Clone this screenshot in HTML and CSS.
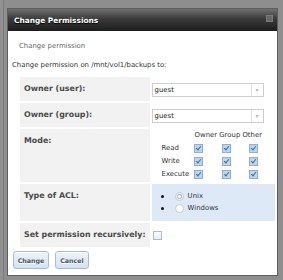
FILE: index.html
```html
<!DOCTYPE html>
<html lang="en">
<head>
    <meta charset="UTF-8">
    <title>Change Permissions</title>
    <link rel="stylesheet" href="styles.css">
</head>
<body>

    <div class="overlay">
        <div class="dialog">
            <div class="titlebar">
                <span class="title">Change Permissions</span>
                <span class="close"></span>
            </div>

            <div class="content">
                <div class="subhead">Change permission</div>
                <p class="intro">Change permission on /mnt/vol1/backups to:</p>

                <table class="form">
                    <tr class="row-short">
                        <th>Owner (user):</th>
                        <td class="cell-select">
                            <div class="select"><span class="select-value">guest</span><span class="select-arrow">&#9662;</span></div>
                        </td>
                    </tr>
                    <tr class="row-short">
                        <th>Owner (group):</th>
                        <td class="cell-select">
                            <div class="select"><span class="select-value">guest</span><span class="select-arrow">&#9662;</span></div>
                        </td>
                    </tr>
                    <tr>
                        <th>Mode:</th>
                        <td class="cell-mode">
                            <div class="mode">
                                <span class="mode-head">Owner Group Other</span>
                                <span class="mode-label">Read</span><span class="check on"></span><span class="check on"></span><span class="check on"></span>
                                <span class="mode-label">Write</span><span class="check on"></span><span class="check on"></span><span class="check on"></span>
                                <span class="mode-label">Execute</span><span class="check on"></span><span class="check on"></span><span class="check on"></span>
                            </div>
                        </td>
                    </tr>
                    <tr>
                        <th>Type of ACL:</th>
                        <td class="cell-acl">
                            <ul class="radios">
                                <li><span class="radio on"></span>Unix</li>
                                <li><span class="radio"></span>Windows</li>
                            </ul>
                        </td>
                    </tr>
                    <tr class="row-short">
                        <th>Set permission recursively:</th>
                        <td class="cell-recursive"><span class="check"></span></td>
                    </tr>
                </table>

                <div class="buttons">
                    <button class="btn btn-change">Change</button>
                    <button class="btn btn-cancel">Cancel</button>
                </div>
            </div>
        </div>
    </div>

</body>
</html>
```

FILE: styles.css
```css
* {
    margin: 0;
    padding: 0;
    box-sizing: border-box;
}

body {
    font-family: 'DejaVu Sans', Verdana, sans-serif;
    font-size: 6.9px;
    color: #333;
    background-color: #8e8e8e;
    width: 283px;
    height: 280px;
    overflow: hidden;
}

/* fondo oscurecido detrás del diálogo */
.overlay {
    height: 280px;
    padding: 8px 5px 0 7px;
    background: linear-gradient(to right, #919191 3px, #7b7b7b 3px, #7b7b7b 4px, #8e8e8e 4px);
}

.dialog {
    height: 268px;
    background-color: #fff;
    border: 1px solid #5e5e5e;
}

.titlebar {
    height: 22px;
    display: flex;
    align-items: center;
    justify-content: space-between;
    padding: 0 4px 0 6px;
    background: linear-gradient(#707070, #3a3a3a 45%, #1c1c1c);
}

.title {
    color: #fff;
    font-weight: bold;
    font-size: 7.4px;
    text-shadow: 0 1px 1px #000;
}

.close {
    width: 7px;
    height: 7px;
    margin-bottom: 3px;
    background-color: #666;
    border: 1px solid #7a7a7a;
}

.content {
    padding: 10px 0 0 4px;
}

.subhead {
    color: #666;
    padding-left: 7px;
    line-height: 10px;
}

.intro {
    margin: 9px 0 5px 0;
    line-height: 10px;
}

/* tabla del formulario */
.form {
    margin: 0 0 0 6px;
    border-spacing: 2px;
    border-collapse: separate;
}

.form th {
    width: 126px;
    padding: 7px 4px 0 4px;
    text-align: left;
    vertical-align: top;
    font-weight: bold;
    font-size: 7.9px;
    color: #4a4a4a;
    background-color: #f2f2f2;
    line-height: 10px;
    white-space: nowrap;
}

.form td {
    width: 125px;
    vertical-align: top;
}

.row-short th,
.row-short td {
    height: 24px;
}

.cell-select {
    padding: 6px 0 0 0;
}

.select {
    width: 112px;
    height: 14px;
    display: flex;
    border: 1px solid #cfcfcf;
    background-color: #fff;
}

.select-value {
    flex: 1;
    padding-left: 2px;
    line-height: 12px;
    color: #222;
}

.select-arrow {
    width: 12px;
    border-left: 1px solid #e2e2e2;
    text-align: center;
    color: #b5b5b5;
    font-size: 6px;
    line-height: 12px;
}

/* permisos */
.cell-mode {
    height: 53px;
    padding: 0 0 0 10px;
}

.mode {
    display: grid;
    grid-template-columns: 32px 28px 27px 12px;
    grid-auto-rows: 13px;
    align-items: center;
}

.mode-head {
    grid-column: 2 / 5;
    line-height: 13px;
    padding-left: 1px;
    white-space: nowrap;
}

.mode-label {
    line-height: 13px;
}

.check {
    display: block;
    width: 9px;
    height: 9px;
    border: 1px solid #a9bccf;
    background: linear-gradient(#fdfdfd, #e9eef3);
}

.check.on {
    background: #bcd5ee;
    border-color: #8fb0d0;
    position: relative;
}

.check.on::after {
    content: "";
    position: absolute;
    left: 2px;
    top: 0px;
    width: 2px;
    height: 4px;
    border: solid #3d6ea5;
    border-width: 0 1.3px 1.3px 0;
    transform: rotate(40deg);
}

/* tipo de ACL */
.cell-acl {
    height: 37px;
    background-color: #dde9f7;
}

.radios {
    list-style: none;
    padding: 6px 0 0 8px;
}

.radios li {
    display: flex;
    align-items: center;
    height: 12px;
    line-height: 12px;
    color: #333;
}

.radios li::before {
    content: "";
    width: 3px;
    height: 3px;
    border-radius: 50%;
    background-color: #111;
    margin: 0 11px 0 1px;
}

.radio {
    width: 9px;
    height: 9px;
    border-radius: 50%;
    border: 1px solid #c4ccd4;
    background: #fff;
    margin-right: 4px;
}

.radio.on {
    background: radial-gradient(circle, #fff 0 1.3px, #b6c3cf 1.5px 2.4px, #eef2f6 2.6px);
}

.cell-recursive {
    padding: 8px 0 0 1px;
}

/* botones */
.buttons {
    display: flex;
    gap: 6px;
    padding: 2px 0 0 1px;
}

.btn {
    height: 18px;
    font-family: 'DejaVu Sans', Verdana, sans-serif;
    font-size: 6.3px;
    font-weight: bold;
    color: #4a5866;
    text-shadow: 0 1px 0 #fff;
    border: 1px solid #a7bdd4;
    border-radius: 3px;
    background: linear-gradient(#eef4fa, #d3e2f2);
    box-shadow: inset 0 1px 0 #fff;
}

.btn-change {
    width: 36px;
}

.btn-cancel {
    width: 34px;
}
```
